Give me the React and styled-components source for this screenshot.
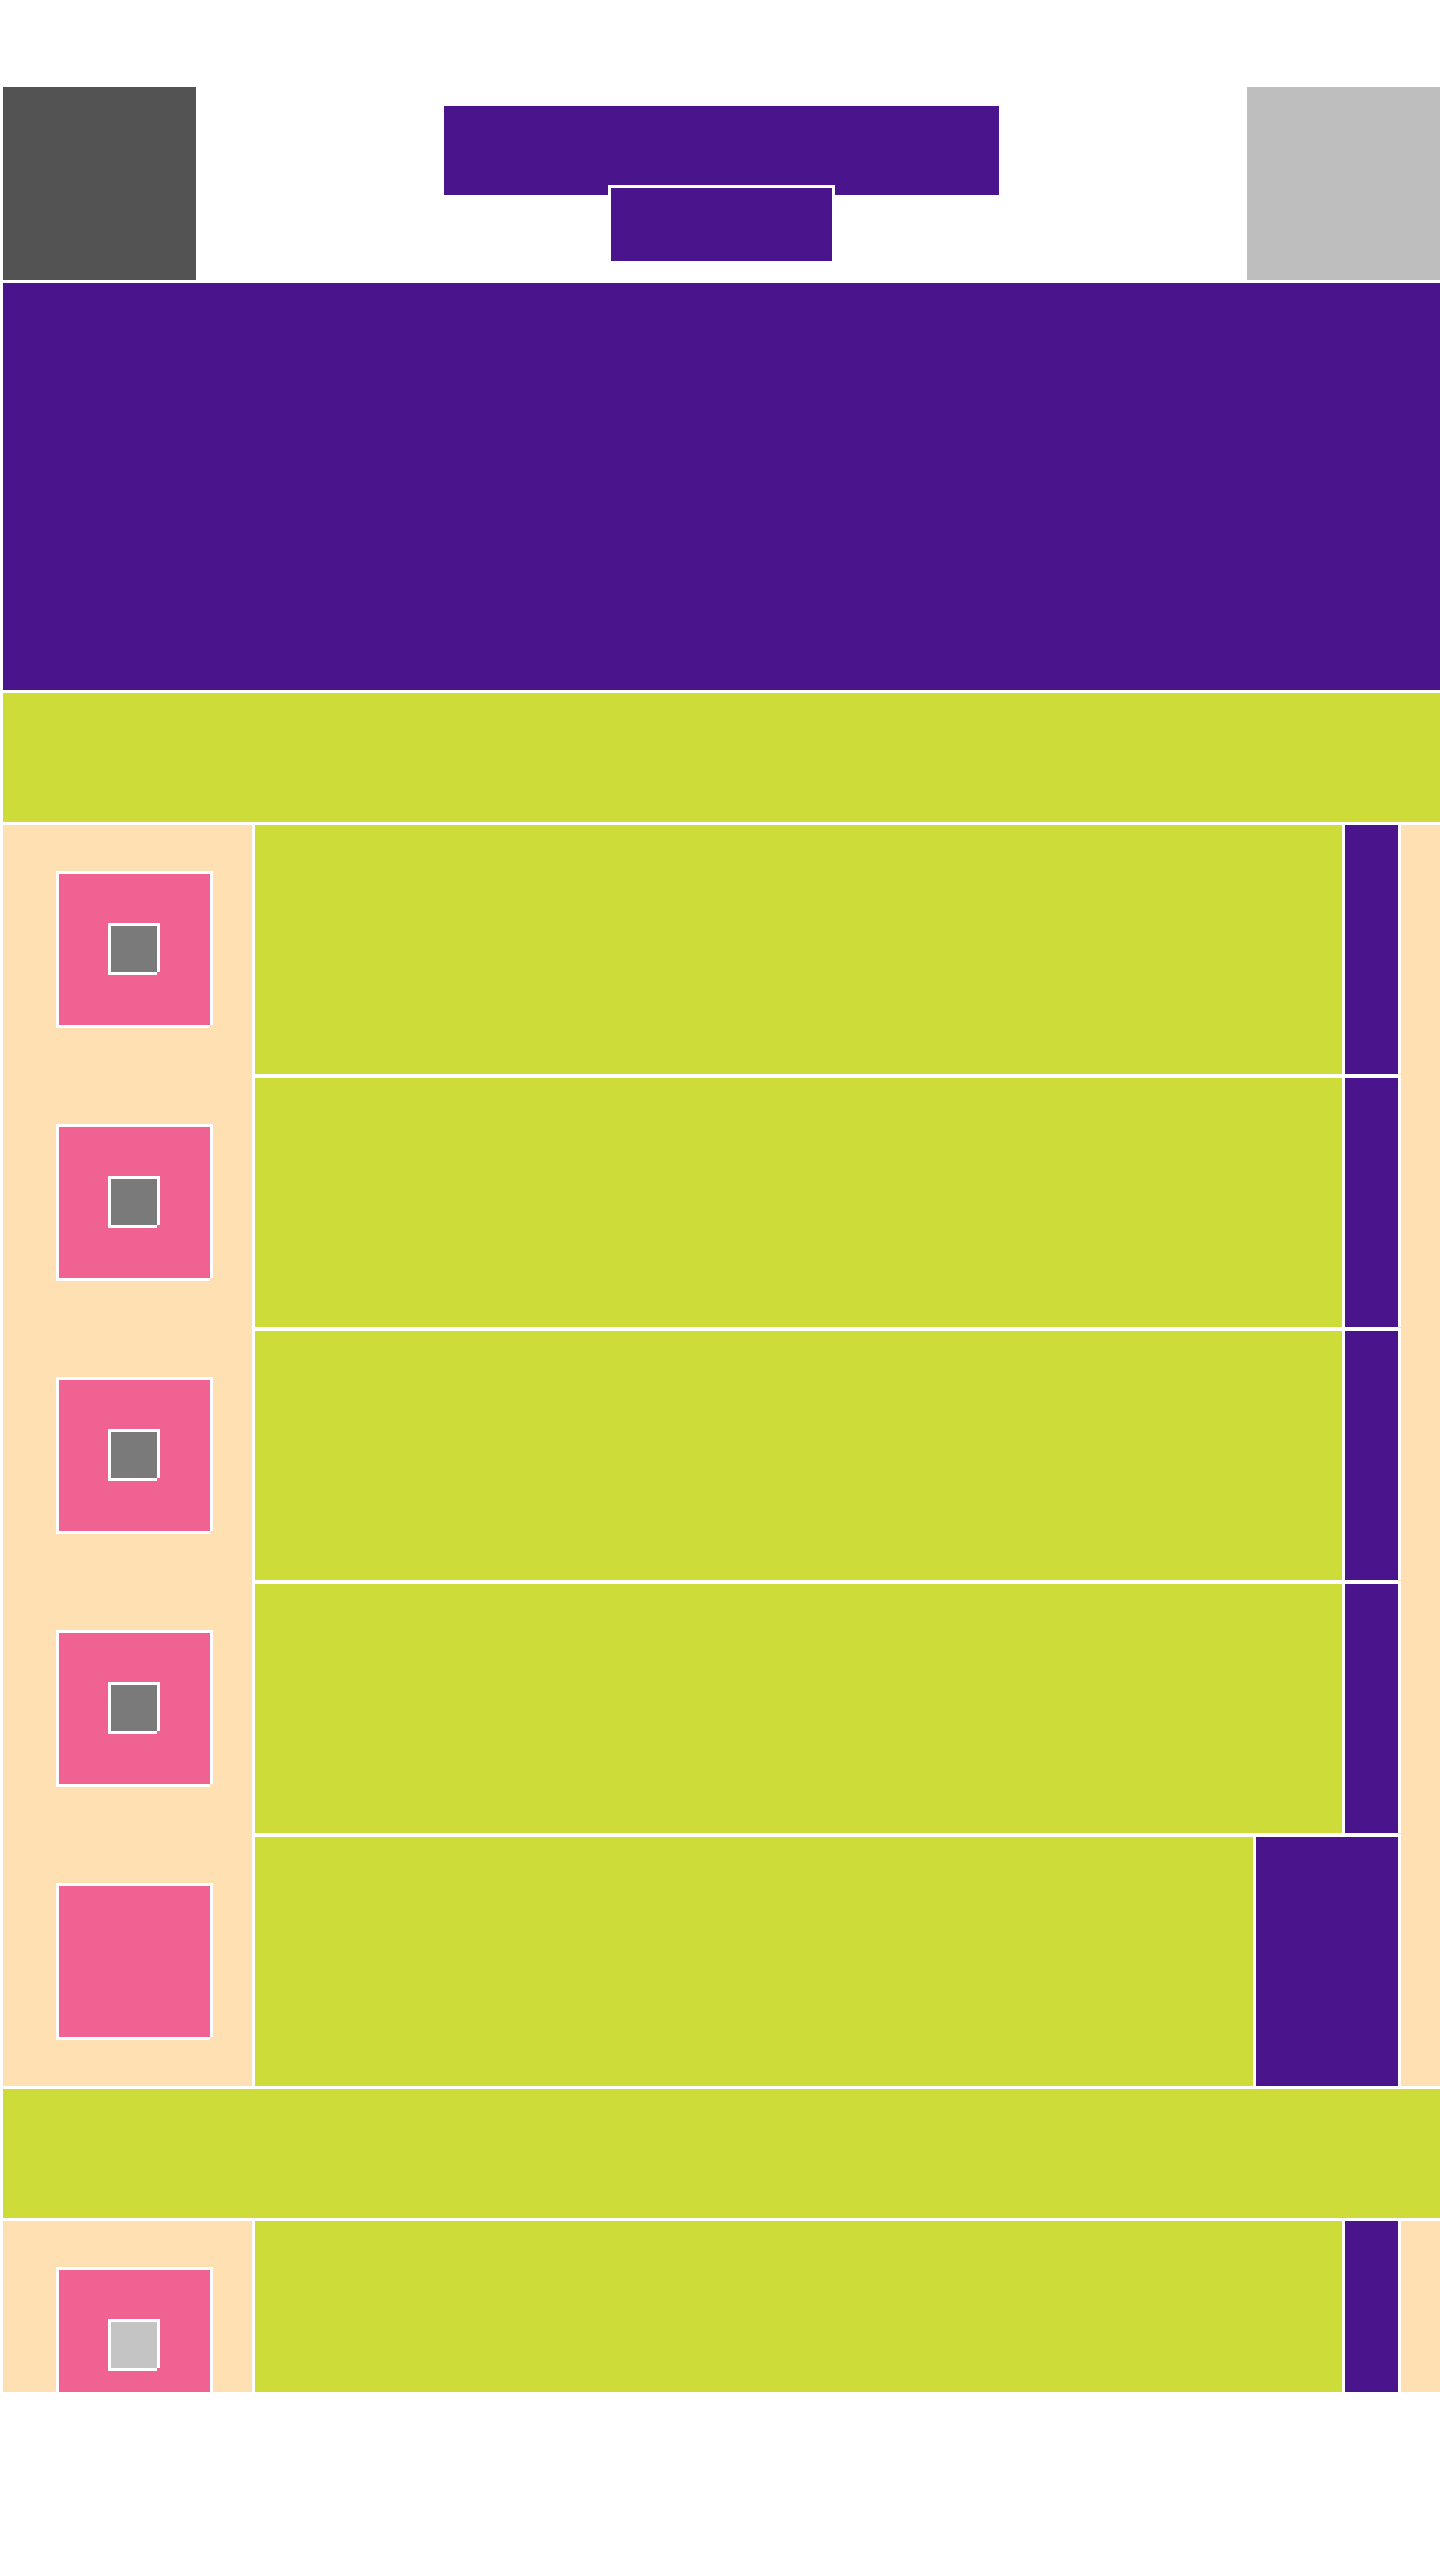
import React from 'react';
import styled, { createGlobalStyle, ThemeProvider } from 'styled-components';

const theme = {
  purple: '#4a148c',
  lime: '#cddc39',
  pink: '#f06292',
  peach: '#ffe0b2',
  line: '#ffffff',
};

const GlobalStyle = createGlobalStyle`
  *, *::before, *::after {
    box-sizing: border-box;
  }
  body {
    margin: 0;
    background: #ffffff;
    font-family: Roboto, "Liberation Sans", sans-serif;
  }
`;

const Screen = styled.div`
  display: flex;
  flex-direction: column;
  height: 100vh;
  padding: 87px 0 168px 3px;
`;

const Toolbar = styled.header`
  flex: none;
  display: flex;
  align-items: center;
  justify-content: space-between;
  margin-bottom: 3px;
`;

const ToolbarButton = styled.button`
  width: 193px;
  height: 193px;
  padding: 0;
  border: 0;
  background: ${({ $tone }) => $tone};
`;

const Heading = styled.div`
  display: flex;
  flex-direction: column;
  align-items: center;
`;

const Title = styled.div`
  width: 555px;
  height: 89px;
  background: ${({ theme }) => theme.purple};
`;

/* The subtitle overlaps the lower edge of the title. */
const Subtitle = styled.div`
  width: 221px;
  height: 73px;
  margin-top: -7px;
  background: ${({ theme }) => theme.purple};
  box-shadow: 0 0 0 3px ${({ theme }) => theme.line};
`;

const Content = styled.main`
  flex: 1;
  min-height: 0;
  overflow: hidden;
  display: flex;
  flex-direction: column;
  gap: 3px;
`;

const Banner = styled.section`
  flex: none;
  height: 407px;
  background: ${({ theme }) => theme.purple};
`;

const SectionHeader = styled.div`
  flex: none;
  height: 129px;
  background: ${({ theme }) => theme.lime};
`;

const List = styled.ul`
  flex: none;
  margin: 0;
  padding: 0 42px 0 0;
  list-style: none;
  background: ${({ theme }) => theme.peach};
`;

const Row = styled.li`
  display: flex;
`;

const Leading = styled.div`
  flex: none;
  width: 249px;
  padding: 49px 0 0 56px;
`;

/* Outline on four sides that leaves the bottom right corner open. */
const Outlined = styled.div`
  box-shadow:
    3px 0 ${({ theme }) => theme.line},
    0 3px ${({ theme }) => theme.line},
    -3px -3px ${({ theme }) => theme.line},
    3px -3px ${({ theme }) => theme.line},
    -3px 3px ${({ theme }) => theme.line};
`;

const Avatar = styled(Outlined)`
  width: 151px;
  height: 151px;
  padding: 52px;
  background: ${({ theme }) => theme.pink};
`;

const Glyph = styled(Outlined)`
  width: 46px;
  height: 46px;
  background: ${({ $tone }) => $tone};
`;

const Body = styled.div`
  flex: 1;
  display: flex;
  gap: 3px;
  padding: 0 0 4px 3px;
  background: ${({ theme }) => theme.line};

  ${Row}:last-child & {
    padding-bottom: 0;
  }
`;

const Label = styled.div`
  flex: 1;
  height: 249px;
  background: ${({ theme }) => theme.lime};
`;

const Trailing = styled.div`
  width: ${({ $wide }) => ($wide ? 142 : 53)}px;
  height: 249px;
  background: ${({ theme }) => theme.purple};
  box-shadow:
    3px 0 ${({ theme }) => theme.line},
    3px -3px ${({ theme }) => theme.line};
`;

const sections = [
  {
    id: 'first',
    rows: [
      { tone: '#7a7a7a' },
      { tone: '#7a7a7a' },
      { tone: '#7a7a7a' },
      { tone: '#7a7a7a' },
      { wide: true },
    ],
  },
  { id: 'second', rows: [{ tone: '#c4c4c4' }] },
];

function ListRow({ tone, wide }) {
  return (
    <Row>
      <Leading>
        <Avatar>{tone && <Glyph $tone={tone} />}</Avatar>
      </Leading>
      <Body>
        <Label />
        <Trailing $wide={wide} />
      </Body>
    </Row>
  );
}

export default function App() {
  return (
    <ThemeProvider theme={theme}>
      <GlobalStyle />
      <Screen>
        <Toolbar>
          <ToolbarButton type="button" aria-label="Back" $tone="#535353" />
          <Heading>
            <Title />
            <Subtitle />
          </Heading>
          <ToolbarButton type="button" aria-label="More" $tone="#bebebe" />
        </Toolbar>
        <Content>
          <Banner />
          {sections.map(({ id, rows }) => (
            <React.Fragment key={id}>
              <SectionHeader />
              <List>
                {rows.map((row, index) => (
                  <ListRow key={index} {...row} />
                ))}
              </List>
            </React.Fragment>
          ))}
        </Content>
      </Screen>
    </ThemeProvider>
  );
}
